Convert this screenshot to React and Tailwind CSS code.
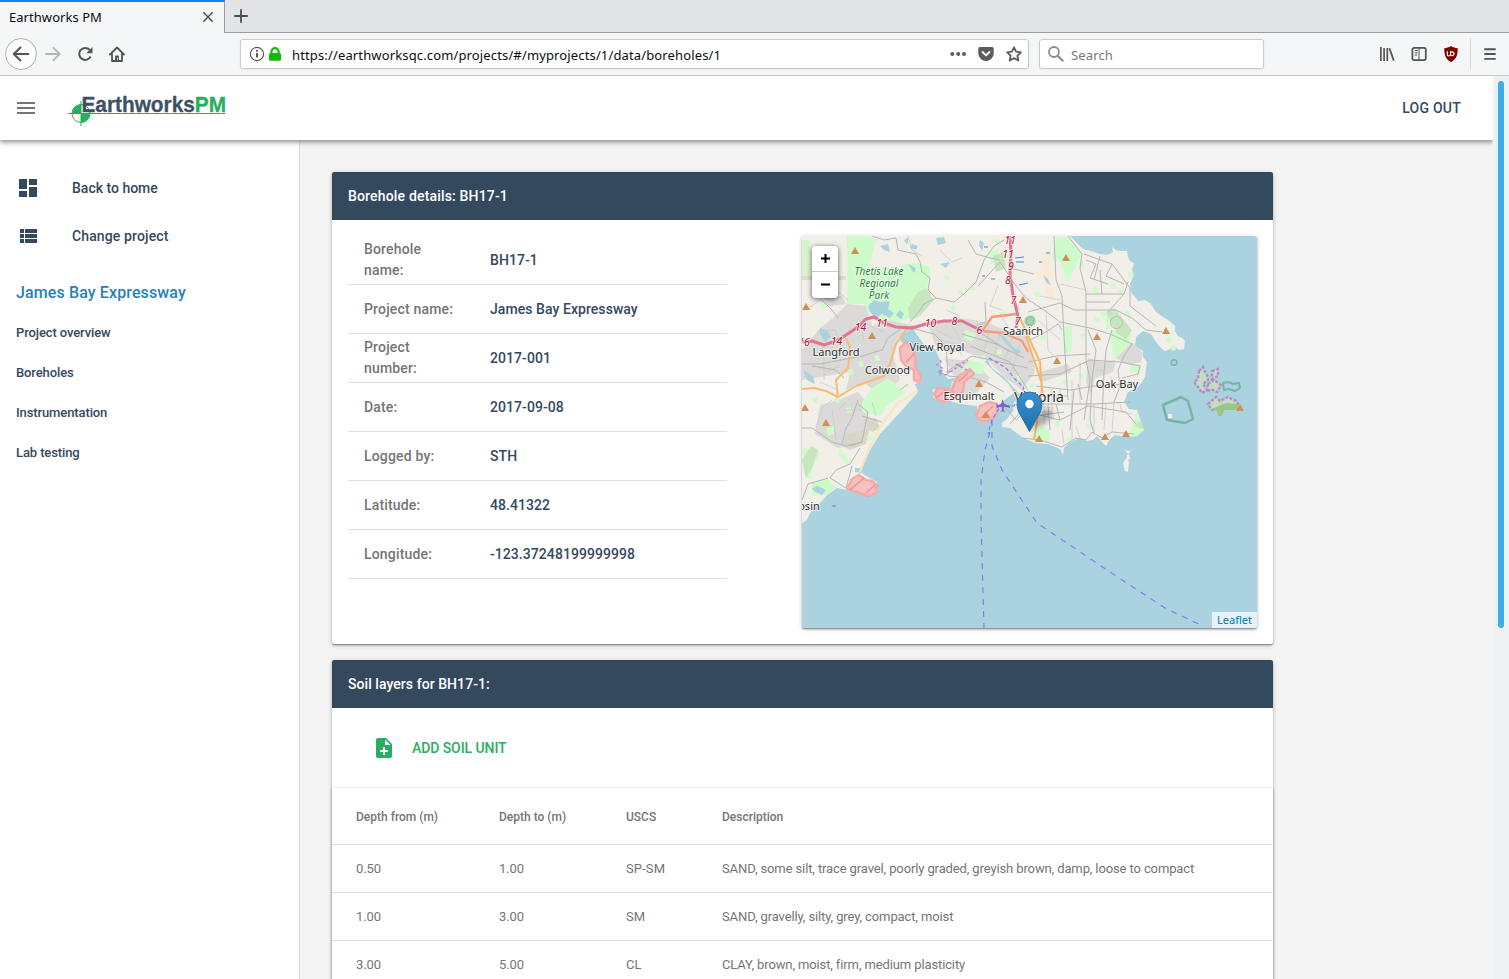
import React from "react";

const SANS = "font-['Noto_Sans',sans-serif]";

const details = [
  ["Borehole name:", "BH17-1"],
  ["Project name:", "James Bay Expressway"],
  ["Project number:", "2017-001"],
  ["Date:", "2017-09-08"],
  ["Logged by:", "STH"],
  ["Latitude:", "48.41322"],
  ["Longitude:", "-123.37248199999998"],
];

const layers = [
  ["0.50", "1.00", "SP-SM", "SAND, some silt, trace gravel, poorly graded, greyish brown, damp, loose to compact"],
  ["1.00", "3.00", "SM", "SAND, gravelly, silty, grey, compact, moist"],
  ["3.00", "5.00", "CL", "CLAY, brown, moist, firm, medium plasticity"],
];

function Icon({ d, className }) {
  return (
    <svg viewBox="0 0 24 24" className={"h-6 w-6 shrink-0 " + className} fill="currentColor">
      <path d={d} />
    </svg>
  );
}

function TabStrip() {
  return (
    <div className="flex h-[33px] bg-[#e3e4e6]">
      <div className="flex w-[225px] items-center justify-between border-t-2 border-r border-t-[#0a84ff] border-r-[#999b9e] bg-[#f5f6f7] pr-[10px] pb-[2px] pl-[9px]">
        <span className="text-[13px] leading-[18px] tracking-[0.05px] text-[#0c0c0d]">Earthworks PM</span>
        <svg viewBox="0 0 12 12" className="h-3 w-3" stroke="#4e4e50" strokeWidth="1.5" fill="none">
          <path d="M1.3 1.3l9.4 9.4M10.700 1.300l-9.400 9.400" />
        </svg>
      </div>
      <div className="flex flex-1 items-center border-b border-[#999b9e] pl-2">
        <svg viewBox="0 0 16 16" className="h-4 w-4" stroke="#4e4e50" strokeWidth="1.8" fill="none">
          <path d="M8 1.200v13.600M1.200 8h13.600" />
        </svg>
      </div>
    </div>
  );
}

function Toolbar() {
  return (
    <div className="flex h-[43px] items-center border-b border-[#c8c9ca] bg-[#f5f6f7]">
      <div className="flex w-60 items-center pl-[5px]">
        <div className="flex h-8 w-8 items-center justify-center rounded-full border border-[#b1b1b3] bg-[#fcfcfc]">
          <svg viewBox="0 0 16 16" className="h-[18px] w-[18px]" fill="none" stroke="#545457" strokeWidth="1.8" strokeLinecap="round" strokeLinejoin="round">
            <path d="M14.500 8H1.800M7.500 2.200L1.600 8l5.900 5.800" />
          </svg>
        </div>
        <svg viewBox="0 0 16 16" className="ml-2 h-4 w-4" fill="none" stroke="#b5b6b8" strokeWidth="1.8" strokeLinecap="round" strokeLinejoin="round">
          <path d="M1 8h13.500M8.500 1.800L14.700 8l-6.200 6.200" />
        </svg>
        <svg viewBox="0 0 16 16" className="ml-4 h-4 w-4" fill="none" stroke="#545457" strokeWidth="2">
          <path d="M13.600 10.500A6 6 0 1 1 12.600 3.800" />
          <path d="M15.500 1v6.200H9.300z" fill="#545457" stroke="none" />
        </svg>
        <svg viewBox="0 0 16 16" className="ml-4 h-4 w-4" fill="none" stroke="#545457" strokeWidth="1.800" strokeLinejoin="round" strokeLinecap="round">
          <path d="M1 8.500L8 1.500l7 7M3 8v7h10V8" />
          <path d="M6 15.500V10.500a1 1 0 0 1 1-1h2a1 1 0 0 1 1 1v5z" fill="#545457" stroke="none" />
          <path d="M8.700 12v1.500" stroke="#fff" strokeWidth=".8" />
        </svg>
      </div>

      <div className="flex h-[30px] w-[789px] items-center rounded-[3px] border border-[#c9cacb] bg-white pr-[6px] pl-2 shadow-[0_1px_3px_rgba(0,0,0,0.06)]">
        <svg viewBox="0 0 16 16" className="h-4 w-4" fill="none" stroke="#545457">
          <circle cx="8" cy="8" r="6.600" strokeWidth="1.100" />
          <path d="M8 7v4.500M8 4v1.800" strokeWidth="1.900" />
        </svg>
        <svg viewBox="0 0 16 16" className="ml-[2px] h-4 w-4" fill="#12bc00">
          <path d="M2 8.500A1.500 1.500 0 0 1 3.300 7V5.700a4.700 4.700 0 0 1 9.400 0V7A1.500 1.500 0 0 1 14 8.500V13.500a1.200 1.200 0 0 1-1.200 1.200H3.200A1.200 1.200 0 0 1 2 13.500zM5.500 7h5V5.700a2.500 2.500 0 0 0-5 0z" />
        </svg>
        <span className="ml-[9px] pt-[2px] text-[13px] leading-[18px] tracking-[0.14px] text-[#0c0c0d]">https://earthworksqc.com/projects/#/myprojects/1/data/boreholes/1</span>
        <svg viewBox="0 0 18 16" className="ml-auto h-4 w-[18px]" fill="#5c5c5e">
          <circle cx="3.300" cy="8" r="2" />
          <circle cx="9.200" cy="8" r="2" />
          <circle cx="15" cy="8" r="2" />
        </svg>
        <svg viewBox="0 0 16 16" className="ml-[11px] h-4 w-4">
          <path d="M2.500 1h11A1.700 1.700 0 0 1 15.700 2.700V7.500a7.700 7.500 0 0 1-15.400 0V2.700A1.700 1.700 0 0 1 2.500 1z" fill="#5c5c5e" />
          <path d="M4.500 6L8 9.400 11.500 6" fill="none" stroke="#fff" strokeWidth="1.900" strokeLinecap="round" strokeLinejoin="round" />
        </svg>
        <svg viewBox="0 0 16 16" className="ml-3 h-4 w-4" fill="none" stroke="#5c5c5e" strokeWidth="1.800" strokeLinejoin="round">
          <path d="M8 1.300l2.100 4.400 4.800.6-3.500 3.300.9 4.900L8 12.100l-4.300 2.400.9-4.900L1.100 6.300l4.800-.6z" />
        </svg>
      </div>

      <div className="ml-[10px] flex h-[30px] w-[225px] items-center rounded-[3px] border border-[#c9cacb] bg-white pl-2 shadow-[0_1px_3px_rgba(0,0,0,0.06)]">
        <svg viewBox="0 0 16 16" className="h-4 w-4" fill="none" stroke="#8c8c8e">
          <circle cx="6" cy="6" r="5" strokeWidth="1.800" />
          <path d="M9.700 9.700l5 5" strokeWidth="2.200" strokeLinecap="round" />
        </svg>
        <span className="ml-[7px] pt-[2px] text-[13px] leading-[18px] tracking-[0.15px] text-[#77777a]">Search</span>
      </div>

      <div className="ml-auto flex items-center pr-[11px]">
        <svg viewBox="0 0 16 16" className="h-4 w-4" fill="none" stroke="#545457" strokeWidth="1.600">
          <path d="M1.900 1v14M5.100 2v13M8.300 2v13" strokeWidth="1.700" />
          <path d="M10.400 2.300l4.400 12.300" strokeWidth="1.800" />
        </svg>
        <svg viewBox="0 0 16 16" className="ml-4 h-4 w-4" fill="none" stroke="#545457">
          <rect x="1.400" y="1.900" width="13.400" height="12.200" rx="1.800" strokeWidth="1.800" />
          <path d="M8 2v12M3.700 4.500h3M3.700 6.800h3M3.700 9.100h2.400" strokeWidth="1" />
        </svg>
        <svg viewBox="0 0 16 16" className="ml-4 h-4 w-4">
          <path d="M8 0c2 1.600 4.500 2 6.700 2.200C14.800 9 13.500 13 8 16 2.500 13 1.200 9 1.300 2.200 3.500 2 6 1.600 8 0z" fill="#800000" />
          <path d="M4.300 5.200v3.300a1.500 1.500 0 0 0 1.500 1.500c1 0 1.700-.6 1.700-1.500V5.200M7.500 8.700a1.900 1.900 0 1 0 0-2" fill="none" stroke="#fff" strokeWidth="1.200" />
        </svg>
        <div className="ml-[11px] h-8 w-px bg-[#d7d8da]" />
        <svg viewBox="0 0 16 16" className="ml-[11px] h-4 w-4" stroke="#545457" strokeWidth="1.900" strokeLinecap="round">
          <path d="M3 3.200h10M3 8h10M3 12.900h10" />
        </svg>
      </div>
    </div>
  );
}

function Logo() {
  return (
    <svg viewBox="68 94 158 32" className="h-8 w-[158px]">
      <circle cx="81" cy="113.500" r="9" fill="#fff" stroke="#27ae60" strokeWidth="1" />
      <path d="M81 113.500h-9a9 9 0 0 1 9-9zM81 113.500h9a9 9 0 0 1-9 9z" fill="#27ae60" />
      <path d="M68 113.500h157.500M81 101v25" stroke="#27ae60" strokeWidth="1" />
      <text x="81.500" y="111.700" fontSize="21.500" fontWeight="700" textLength="144.500" lengthAdjust="spacingAndGlyphs" className="font-['Liberation_Sans',sans-serif]" fill="#3d5166" stroke="#3d5166" strokeWidth=".3">
        Earthworks<tspan fill="#27ae60" stroke="#27ae60">PM</tspan>
      </text>
    </svg>
  );
}

function Sidebar() {
  return (
    <aside className="w-[300px] shrink-0 border-r border-[#dedede] bg-white pt-6 font-medium text-[#34495e]">
      <div className="flex h-12 items-center gap-8 pl-4 text-[14px]">
        <Icon className="" d="M3 13h8V3H3v10zm0 8h8v-6H3v6zm10 0h8V11h-8v10zm0-18v6h8V3h-8z" />
        Back to home
      </div>
      <div className="flex h-12 items-center gap-8 pl-4 text-[14px] tracking-[0.13px]">
        <Icon className="" d="M4 14h4v-4H4v4zm0 5h4v-4H4v4zM4 9h4V5H4v4zm5 5h12v-4H9v4zm0 5h12v-4H9v4zM9 5v4h12V5H9z" />
        Change project
      </div>
      <div className="mt-[9px] flex h-12 items-center pl-4 text-[16px] tracking-[0.12px] text-[#2980b9]">James Bay Expressway</div>
      <nav className="-mt-1 text-[13px] tracking-[-0.11px]">
        {["Project overview", "Boreholes", "Instrumentation", "Lab testing"].map((t) => (
          <div key={t} className="flex h-10 items-center pl-4">{t}</div>
        ))}
      </nav>
    </aside>
  );
}

const LAND =
  "M802 236H1070L1076 242 1083 249 1091 251 1100 254 1107 255 1113 252 1112 247 1116 250 1120 251 1127 251 1128 257 1130 261 1134 263 1132 270 1133 277 1130 284 1131 292 1135 297 1138 301 1145 300 1151 304 1156 312 1163 317 1168 320 1175 326 1175 331 1178 336 1182 338 1185 341 1184 349 1179 350 1175 347 1165 351 1160 347 1156 342 1151 334 1143 331 1136 337 1135 346 1143 351 1143 357 1147 362 1145 377 1142 382 1138 387 1128 392 1124 402 1129 409 1137 410 1141 422 1144 430 1137 436 1127 437 1115 435 1110 439 1106 446 1102 442 1097 436 1093 440 1087 441 1080 438 1070 442 1064 448 1063 455 1060 449 1048 444 1035 443 1023 438 1010 428 1002 427 1002 423 1008 418 1013 411 1014 402 1022 396 1012 386 1004 377 992 368 987 359 985 362 996 373 1008 383 1014 393 1003 401 994 410 987 421 977 419 977 406 960 404 950 401 940 402 933 397 933 389 944 391 950 391 952 382 960 377 948 379 942 371 940 360 935 349 925 346 913 329 903 332 900 341 910 349 916 367 922 381 915 384 918 392 904 408 880 434 870 450 860 472 868 477 877 482 877 493 868 496 847 490 837 488 827 495 820 503 810 513 807 520 802 523Z";

const urban = [
  "M833 318L847 304 866 306 872 326 888 320 916 326 898 338 893 355 900 380 880 395 866 384 846 390 850 372 802 380 802 350 820 328Z",
  "M822 296L842 296 846 304 830 306Z",
  "M820 405L838 400 843 398 858 392 866 402 868 416 878 424 866 432 862 444 850 446 838 448 815 434Z",
  "M929 326L960 318 985 322 1010 332 1030 345 1035 372 1022 390 1004 377 987 359 965 352 945 352 935 345Z",
  "M944 358L975 362 990 378 975 395 962 400 948 392 955 378Z",
  "M1132 342L1143 353 1141 362 1128 365 1116 358Z",
  "M1088 358L1102 362 1116 360 1113 372 1095 378 1090 396 1086 380Z",
  "M1004 330L1028 334 1026 352 1008 350Z",
  "M1040 372L1068 364 1072 372 1042 382Z",
];

const green = [
  "M847 236H870L876 240 870 262 872 268 900 268 906 264 917 263 930 266 930 276 926 290 920 306 912 316 900 322 884 320 872 316 864 304 847 304Z",
  "M1056 238L1069 236 1081 254 1071 277 1067 282 1060 262 1052 258Z",
  "M1064 327L1072 326 1071 352 1064 354Z",
  "M862 402L872 388 888 378 906 392 886 406 880 416 862 412Z",
  "M1030 436L1042 426 1050 432 1049 442 1034 443Z",
  "M1106 314L1118 310 1120 322 1106 330Z",
  "M1130 365L1141 364 1140 374 1130 372Z",
  "M988 252L998 250 998 262 990 264Z",
  "M802 448L820 452 814 464 810 480 804 474Z",
  "M812 482L828 478 836 488 826 495 812 496Z",
  "M840 448L848 460 852 462 846 464 838 454Z",
  "M826 428L834 426 834 434 828 436Z",
  "M1026 318L1034 314 1036 322 1030 327 1024 324Z",
  "M1137 412L1141 430 1144 430 1137 436 1129 435Z",
  "M1110 330L1132 334 1128 346 1114 360 1112 346Z",
  "M965 330L976 334 972 342 964 338Z",
  "M970 360L984 364 983 374 960 372Z",
];

const majorGreys = [
  "M802 364L820 364 862 356 882 350 888 338 902 328 915 329 934 334 946 346 948 376 972 378 986 382 1004 392",
  "M822 300L832 310 838 318",
  "M872 236L884 240 896 238 898 250 916 254 920 262 922 272 930 278 928 290 936 298",
  "M910 322L920 310 924 304 936 298",
  "M936 298L954 302 964 294 976 282 984 260 994 246 1004 240",
  "M968 240L976 254 990 258 1000 260",
  "M985 302L986 322 976 326",
  "M1054 236L1056 280 1062 296 1064 336 1066 370 1068 400",
  "M1008 276L1026 298 1044 310 1060 322 1090 328 1110 334 1132 344",
  "M1028 312L1060 303 1074 310 1116 310 1132 318 1146 330 1162 332",
  "M1068 236L1082 254 1080 268 1086 292 1086 360 1090 380 1084 420",
  "M1084 254L1112 264 1130 288 1130 306 1156 326",
  "M1086 294H1124L1128 282M1086 302H1110M1100 270L1102 294M1124 294L1108 312",
  "M1088 330L1096 350 1092 380 1090 420 1094 434",
  "M1112 330L1106 350 1104 372 1102 420",
  "M1030 340L1046 332 1058 324 1062 330",
  "M1028 362L1056 356 1090 354M1028 376L1060 374 1090 360 1120 362 1140 366",
  "M1036 386L1070 390 1094 386 1128 384M1042 404H1094L1130 402",
  "M1040 415L1060 420 1088 406 1126 412 1136 424",
  "M1022 438L1040 440 1062 447 1076 438 1086 440 1092 432 1102 438 1112 432 1134 434",
  "M1132 344L1124 356 1118 370 1120 386 1114 402",
  "M1140 366L1138 374 1122 378",
  "M1086 260L1096 264 1090 278 1108 284M1100 256L1094 280M1106 276L1124 284M1112 264L1106 276",
  "M812 366L836 370 844 378M802 428L812 428 832 442 846 446 862 442 866 422 868 412 858 404",
  "M850 446L862 442M858 400L852 418 846 428 842 444",
  "M862 416L882 422M860 448L850 464 836 470 830 478 846 488 852 466",
  "M802 500L808 484 828 478",
  "M1004 406L1016 420 1026 410M1010 424L1022 410M1048 404L1050 430M1056 404L1060 420M1034 416L1064 412",
  "M978 286L1000 262 1008 274M1010 268L1034 274",
  "M900 390L908 384M872 374L878 370M946 372L972 356 1000 362 1028 368",
  "M962 334L996 344 1024 358M970 346L1010 362 1028 390M976 330L1010 352",
  "M1074 390L1070 430M1078 384L1082 400M1028 396L1068 396",
];

const minorGreys = [
  "M806 310L820 300 832 306 836 290 848 300M822 330L836 330 838 342M826 372L840 366M824 352V380M860 320L864 340M870 326L884 332",
  "M908 236L912 250 922 256M940 250L952 262 962 258M998 286L990 306 1002 310M1012 298L1020 310M946 310L960 316M1000 314L1010 330",
  "M1046 310L1048 350M1038 320L1060 340M1048 350L1060 362M1072 380V440M1080 362V404M1096 370H1106M1110 376L1116 386M1060 284L1086 290M1040 296L1060 300",
  "M1036 400L1052 402M1034 406L1054 408M1038 412L1052 412M1044 390V424M1052 388V420M1060 388V404M1062 430L1064 444M1076 426L1080 438M1094 404V434M1106 404L1104 430M1114 402L1112 432M1120 404L1122 412 1132 414",
  "M816 428L822 408 832 400M838 410L846 402M872 402L876 416M832 410L836 440M846 410L862 410M820 382L838 390 836 400",
  "M940 340L956 344 962 356M990 330L984 350M1000 334L994 356M1012 338L1004 364M1020 342L1012 372M952 326L968 352M936 330L952 338",
];

const peaks = [
  [855, 251], [806, 307], [872, 336], [805, 408], [826, 423], [979, 384], [986, 415], [1023, 300],
  [1066, 258], [1097, 337], [1057, 361], [1166, 331], [1240, 408], [1039, 439], [1105, 437], [1126, 434],
];

const shields = [
  [1010, 240, "11"], [1008, 254, "11"], [1011, 266, "9"], [1008, 280, "8"], [1013.5, 300, "7"], [1018, 321, "7"],
  [860.5, 327, "14"], [882, 323, "11"], [930.500, 323, "10"], [954.500, 321, "8"], [979.500, 330, "6"], [804, 342, "16"], [836.500, 341, "14"],
];

const places = [
  [836, 352, "Langford", 11], [887.5, 370, "Colwood", 11], [937, 347, "View Royal", 11],
  [969, 396, "Esquimalt", 11], [1023, 331, "Saanich", 11], [1117, 384, "Oak Bay", 11],
  [1039, 397, "Victoria", 14], [809, 506, "osin", 11],
];

function MapDrawing() {
  return (
    <svg viewBox="802 236 455 392" className="block h-[392px] w-[455px]">
      <rect x="802" y="236" width="455" height="392" fill="#aad3df" />
      <path d={LAND} fill="#f2efe9" />
      {urban.map((d) => <path key={d} d={d} fill="#dbdad8" />)}
      {green.map((d) => <path key={d} d={d} fill="#cdfbc9" />)}
      <path d="M1042 252L1050 250 1052 290 1056 300 1046 298ZM1036 272L1042 270 1044 282Z" fill="#fbe9d8" />
      <path d="M918 292L926 288 934 300 920 316 910 320 908 308ZM1106 312L1114 308 1132 330 1126 340 1116 332ZM993 256L1004 252 1006 268 996 272ZM1134 426L1141 420 1144 430ZM811 446L818 450 812 468 806 478 802 460Z" fill="#c8e6bd" />
      <path d="M846 434L860 431 870 428 866 444 850 450 842 446ZM862 420L876 418 880 428 872 432Z" fill="#d9d6c8" />
      <path d="M802 276h44v4h-44z" fill="#dcdfcb" />
      <path d="M802 240h8v36h-8z" fill="#d6f3cc" />
      <path d="M868 306l6-6 6 2 10-1-2 8 6 4-4 5-8-4-6 4-6-6zM880 246l8-2 2 8-6-2zM912 244l6 2-2 4-6-2zM888 282l8-2-4 4zM908 264l8 4-2 5zM936 238l8-1 2 6-8 2zM940 264l10-2-4 6zM980 240l4 3-2 8-3-6zM820 328l8 3 3 6-6 5-5-8zM803 370l10 6 2 8-8-4zM904 240l5-3-2 8zM900 310l4 4-3 5-5-4zM1043 275l5 4 3 7-5-4zM998 332l6 4 10 12 8 4-6 2-10-10zM855 468l5 0 1 5-6-1zM812 488l6-2 8 4-4 5-8-4z" fill="#aad3df" />
      <path d="M1019 285l9-2M1015 258l9-1M984 247h4M991 279h4M1016 262h8M1046 253h4M1039 262h3M982 276h3" stroke="#3c8ddb" strokeWidth="1" />
      <g fill="#cdfbc9">
        {[[950,306],[958,290],[1000,312],[944,276],[968,286],[994,240],[1092,288],[1100,312],[1080,334],[1094,318],[1110,284],[1078,374],[1098,382],[1054,422],[1066,438],[1028,384],[858,362],[874,356],[834,398],[846,408],[866,436],[848,370],[812,398],[996,350],[980,356],[1040,336],[1078,262],[1118,290],[1124,312],[1166,338],[1170,346],[1034,292],[912,372],[820,304],[1128,272],[1016,376],[1062,380],[1086,424]].map(([x, y]) => (
          <path key={x + "-" + y} d={`M${x} ${y}l5-1 1 5-4 1z`} />
        ))}
      </g>

      <g fill="none" strokeLinejoin="round">
        {minorGreys.map((d) => <path key={d} d={d} stroke="#cbcaca" strokeWidth=".8" />)}
        {majorGreys.map((d) => <path key={d} d={d} stroke="#b7b7b9" strokeWidth="1" />)}
        <circle cx="1116.500" cy="322.500" r="6" stroke="#b9b9bb" />
        <path d="M900 400L880 427 868 450 860 472M918 390L900 402" stroke="#f5e9ba" strokeWidth="2" />
        <path d="M802 389L814 388 826 391 838 397 856 386 884 376 890 364 896 344 906 330 914 326M838 397L836 380 848 368 850 348 846 338" stroke="#f5bd74" strokeWidth="2" />
        <path d="M1020 318L1030 340 1040 362 1042 390 1038 416 1034 440M1026 336L1036 366 1042 384" stroke="#f9b56b" strokeWidth="2" />
        <path d="M982 331L992 317 1016 314M982 331L1004 333 1022 341 1028 352" stroke="#fa9a77" strokeWidth="2.300" />
        <path d="M802 342L812 341 824 345 836 341 846 335 858 327 866 319 874 317 884 323 896 327 912 328 926 324 944 321 962 321 970 325 982 331M1010 236L1011 252 1010 274 1013 296 1018 316 1016 328" stroke="#e2758f" strokeWidth="3" />
      </g>

      <g fill="#f8b9b8" fillOpacity=".85" stroke="#f5aaaa" strokeWidth="2.500" strokeLinejoin="round">
        <path d="M900 348L906 342 912 348 916 358 915 366 921 376 920 382 914 380 914 370 906 366 901 360z" />
        <path d="M934 394L938 388 948 389 952 393 950 400 944 402 938 400zM956 380L960 375 970 369 974 374 964 382 963 392 956 396 952 390z" />
        <path d="M976 416L980 406 990 402 997 404 997 414 992 420 982 422z" />
        <path d="M847 489L852 479 859 475 866 480 872 481 877 486 876 493 868 496 860 493z" />
      </g>
      <path d="M850 490l14-12M866 493l10-9M936 398l10-8M958 382l10-9M981 418l12-12M906 362l8-8" stroke="#f58f8f" strokeWidth="1.400" />
      <path d="M936 364l6 4-4 5 8 2 6-6M942 370l-3 5M950 372l18-12M956 364l14 8M940 360l2 4" stroke="#bb8dce" strokeWidth="1.500" strokeDasharray="3 2" fill="none" />

      <g fill="none" stroke="#66a98c" strokeOpacity=".75" strokeWidth="2.500" strokeLinejoin="round">
        <path d="M1163 405L1181 397 1188 401 1193 419 1185 423 1167 420z" />
        <circle cx="1174" cy="362.500" r="2.800" strokeWidth="1.500" />
        <path d="M1223 383l6-1 4 2 6-1 1 5-5 3-6-2-5 1z" strokeWidth="2" />
        <circle cx="1030" cy="321" r="4.500" fill="#a9d3ab" strokeOpacity=".4" />
      </g>
      <rect x="1168" y="414" width="4" height="4" fill="#f2efe9" />
      <g fill="#c4dcc0" stroke="#b98bcb" strokeWidth="2.400" strokeDasharray="3 1.500">
        <path d="M1199 371l4-4 2 5 2 3 1 5-5 4 4 6-5 3-4-6-4-5 4-3zM1212 371l6-2 0 7-6 3zM1208 384l6-4 7 5-4 7-6-3-4 3z" />
        <path d="M1208 404l8-7 4 4 8-4 8 4 4 6-8 1-10 0-10 2z" />
      </g>
      <path d="M1212 409l14-6 10 1 4 4-6 2-10 0-2 6-4 0-1-5z" fill="#9cc487" />
      <path d="M1127 457l2 5-1 10-3-1-2-8zM1124 449l4 2 3 0-3 3zM1127 455l2-1 1 5-3 1z" fill="#f2efe9" />
      <path d="M831 506l3-1 3 1-3 1z" fill="#bd77bd" />

      <g fill="none" stroke="#747cf3" strokeWidth="1.100">
        <path d="M990 432L985 450 981 480 981 520 984 628M992 420L992 446 1002 470 1037 523 1110 572 1165 608 1203 626" strokeDasharray="6 6" />
        <path d="M989 358L1006 368 1014 378 1024 388 1014 406 1001 405 992 420 988 434M996 404L1000 408" strokeDasharray="4 2.500" />
      </g>
      <path d="M1002.500 399l1.500 4.500 6 3v1.500l-6-1.500-.5 3.500 2 1.500h-5l1.500-1.500-.5-3.500-5 1.500V406l5-2.500z" fill="#8461c4" />

      {peaks.map(([x, y]) => (
        <path key={x + "," + y} d={`M${x} ${y - 4}l4 7h-8z`} fill="#d08f55" />
      ))}

      <g className={SANS} textAnchor="middle" stroke="#fff" strokeOpacity=".65" strokeWidth="2" paintOrder="stroke" strokeLinejoin="round">
        <g fontSize="10.500" fontStyle="italic" fill="#a8173a">
          {shields.map(([x, y, t]) => <text key={t + x} x={x} y={y + 4}>{t}</text>)}
        </g>
        <g fontSize="10" fontStyle="italic" fill="#1f8535">
          <text x="879" y="275">Thetis Lake</text>
          <text x="879" y="287">Regional</text>
          <text x="879" y="299">Park</text>
        </g>
        <g fill="#2b2b2b">
          {places.map(([x, y, t, s]) => <text key={t} x={x} y={y + s * 0.36} fontSize={s}>{t}</text>)}
        </g>
      </g>

      <defs>
        <linearGradient id="pin" x1="0" y1="0" x2="0" y2="1">
          <stop offset="0" stopColor="#3b8fd0" />
          <stop offset="1" stopColor="#1f70ab" />
        </linearGradient>
        <filter id="soft" x="-50%" y="-50%" width="200%" height="200%">
          <feGaussianBlur stdDeviation="2.500" />
        </filter>
      </defs>
      <path d="M1030 431L1037 414Q1046 406 1052 411 1053 418 1044 424z" fill="#000" fillOpacity=".28" filter="url(#soft)" />
      <path d="M1029.500 431.500L1019 412.500Q1017 408 1017 404.500a12.500 12.500 0 0 1 25 0Q1042 408 1040 412.500z" fill="url(#pin)" stroke="#2a6fa8" strokeWidth="1" />
      <circle cx="1029.500" cy="404" r="4.200" fill="#fff" />
    </svg>
  );
}

function MapPanel() {
  return (
    <div className="relative h-[392px] w-[455px] overflow-hidden rounded-[2px]">
      <MapDrawing />
      <div className="absolute top-[10px] left-[10px] flex w-[26px] flex-col rounded-[4px] bg-white shadow-[0_1px_5px_rgba(0,0,0,0.65)]">
        <div className="flex h-[26px] items-center justify-center border-b border-[#ccc] pl-px">
          <svg viewBox="0 0 9 9" className="h-[9px] w-[9px]" stroke="#000" strokeWidth="2"><path d="M0 4.500h9M4.500 0v9" /></svg>
        </div>
        <div className="flex h-[26px] items-center justify-center pb-px pl-px">
          <svg viewBox="0 0 9 9" className="h-[9px] w-[9px]" stroke="#000" strokeWidth="2"><path d="M0 4.500h9" /></svg>
        </div>
      </div>
      <div className={"absolute right-0 bottom-0 bg-white/70 px-[5px] text-[11px] leading-4 text-[#0078a8] " + SANS}>Leaflet</div>
    </div>
  );
}

const CARD = "w-[941px] rounded-[2px] bg-white shadow-[0_1px_5px_rgba(0,0,0,0.2),0_2px_2px_rgba(0,0,0,0.14),0_1px_1px_rgba(0,0,0,0.25)]";
const CARD_HEAD = "flex h-12 items-center rounded-t-[2px] bg-[#34495e] pl-4 text-[14px] font-medium text-white";

export default function App() {
  return (
    <div className="flex h-[979px] w-[1509px] flex-col overflow-hidden bg-white font-[Roboto,sans-serif]">
      <div className={SANS}>
        <TabStrip />
        <Toolbar />
      </div>
      <div className="flex min-h-0 flex-1">
        <div className="flex w-[1493px] flex-col overflow-hidden">
          <header className="relative z-10 flex h-16 shrink-0 items-center bg-white pr-8 pl-[14px] shadow-[0_2px_4px_rgba(0,0,0,0.3),0_4px_5px_rgba(0,0,0,0.12)]">
            <Icon className="mr-[30px] text-[#757575]" d="M3 18h18v-2H3v2zm0-5h18v-2H3v2zm0-7v2h18V6H3z" />
            <div className="pt-1"><Logo /></div>
            <span className="ml-auto text-[14px] font-medium tracking-[0.25px] text-[#34495e]">LOG OUT</span>
          </header>
          <div className="flex min-h-0 flex-1">
            <Sidebar />
            <main className="flex-1 overflow-hidden bg-[#f4f4f4] pt-8 pl-8">
              <section className={CARD}>
                <div className={CARD_HEAD + " tracking-[0.17px]"}>Borehole details: BH17-1</div>
                <div className="flex h-[424px] justify-between p-4">
                  <div className="w-[379px] text-[14px] leading-[21px] font-medium">
                    {details.map(([k, v]) => (
                      <div key={k} className="flex h-[49px] items-center border-b border-[#e0e0e0]">
                        <div className="w-[142px] pr-8 pl-4 tracking-[0.17px] text-[#757575]">{k}</div>
                        <div className="tracking-[0.06px] text-[#34495e]">{v}</div>
                      </div>
                    ))}
                  </div>
                  <div className="h-[392px] rounded-[2px] shadow-[0_1px_5px_rgba(0,0,0,0.2),0_2px_2px_rgba(0,0,0,0.14),0_1px_1px_rgba(0,0,0,0.25)]">
                    <MapPanel />
                  </div>
                </div>
              </section>

              <section className={"mt-4 " + CARD}>
                <div className={CARD_HEAD + " tracking-[0.06px]"}>Soil layers for BH17-1:</div>
                <div className="flex h-20 items-center gap-4 pl-10 text-[14px] font-medium tracking-[-0.08px] text-[#27ae60]">
                  <Icon className="" d="M14 2H6c-1.100 0-1.990.9-1.990 2L4 20c0 1.100.89 2 1.990 2H18c1.100 0 2-.9 2-2V8l-6-6zm2 14h-3v3h-2v-3H8v-2h3v-3h2v3h3v2zm-3-7V3.500L18.500 9H13z" />
                  ADD SOIL UNIT
                </div>
                <div className="h-[240px] bg-white text-[#757575] shadow-[0_1px_3px_rgba(0,0,0,0.2),0_1px_1px_rgba(0,0,0,0.14),0_0_1px_rgba(0,0,0,0.2)]">
                  <div className="grid h-[57px] grid-cols-[143px_127px_96px_1fr] items-center border-b border-[#e0e0e0] pt-[2px] pl-6 text-[12px] font-medium">
                    {["Depth from (m)", "Depth to (m)", "USCS", "Description"].map((h) => <div key={h}>{h}</div>)}
                  </div>
                  {layers.map((row) => (
                    <div key={row[0]} className="grid h-12 grid-cols-[143px_127px_96px_1fr] items-center border-b border-[#e0e0e0] pl-6 text-[13px] tracking-[-0.115px]">
                      {row.map((c, i) => <div key={i} className={i === 2 ? "tracking-[0.1px]" : ""}>{c}</div>)}
                    </div>
                  ))}
                </div>
              </section>
            </main>
          </div>
        </div>
        <div className="flex w-4 justify-center bg-[#eff0f1] pt-[5px]">
          <div className="h-[547px] w-[6px] rounded-full bg-[#3daee9]" />
        </div>
      </div>
    </div>
  );
}
